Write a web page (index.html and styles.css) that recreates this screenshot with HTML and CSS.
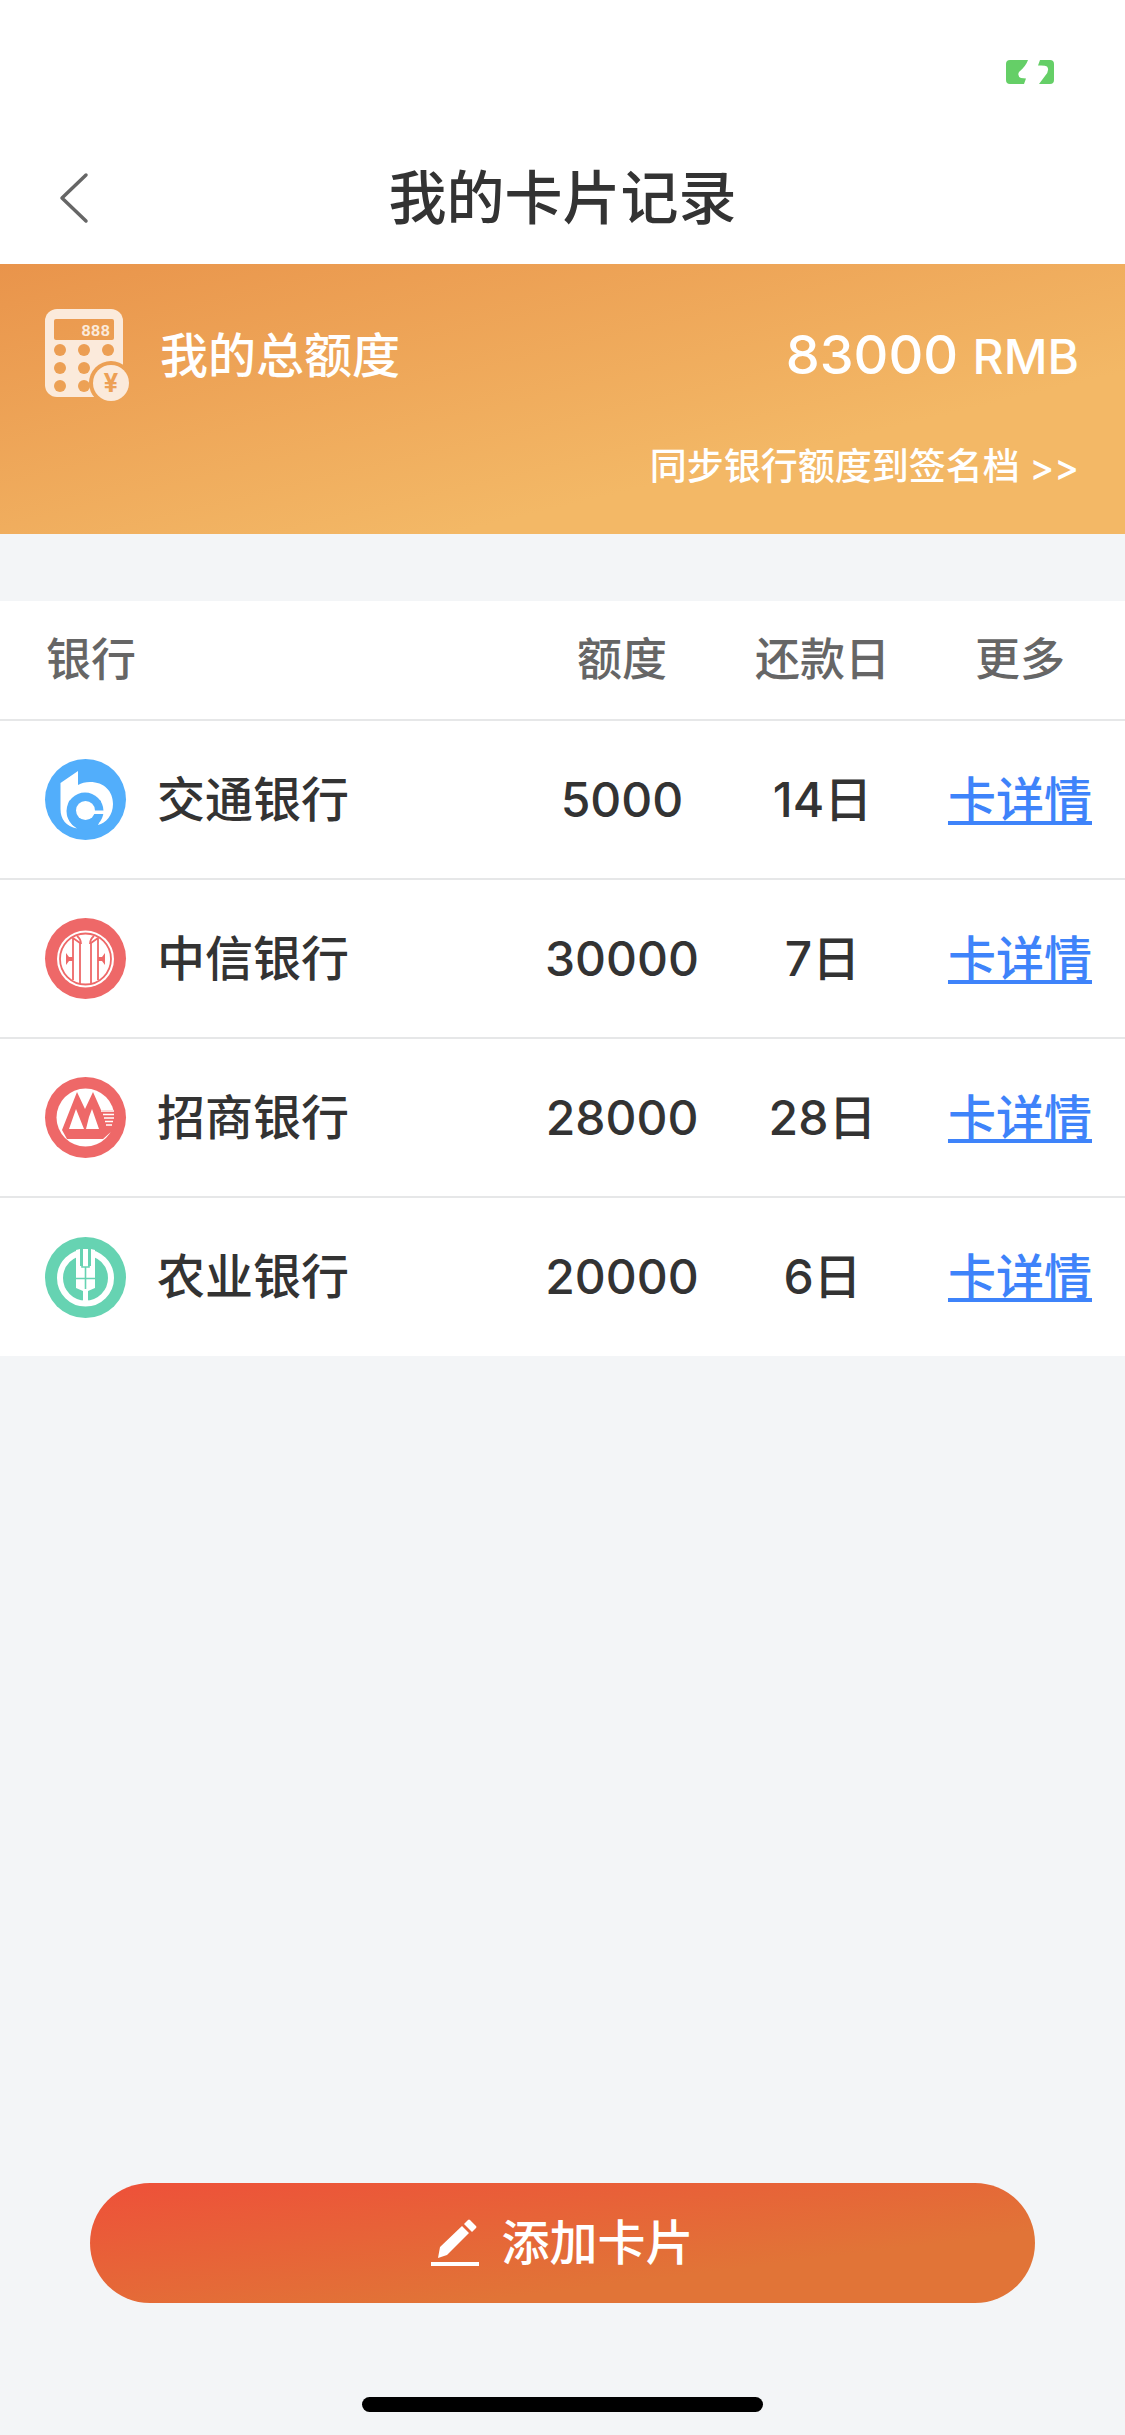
FILE: index.html
```html
<!DOCTYPE html>
<html lang="zh-CN">
<head>
<meta charset="utf-8">
<meta name="viewport" content="width=device-width, initial-scale=1">
<title>我的卡片记录</title>
<link rel="stylesheet" href="styles.css">
</head>
<body>
<div class="page">
  <header class="top">
    <div class="status">
      <svg class="battery" viewBox="0 0 48 24" aria-hidden="true">
        <path fill="#65cf67" d="M4 0H22Q20 6 13 12Q11 16 15 18L20 18.500L18 24H4Q0 24 0 20V4Q0 0 4 0ZM34 0H44Q48 0 48 4V20Q48 24 44 24H33L39 16Q44 10 41 6.500Q39 5 32 5.500Z"/>
      </svg>
    </div>
    <nav class="nav">
      <button class="back" type="button" aria-label="返回">
        <svg viewBox="0 0 30 52" aria-hidden="true"><path d="M27 3L3 26L27 49" fill="none" stroke="#666" stroke-width="3.500" stroke-linecap="round" stroke-linejoin="round"/></svg>
      </button>
      <h1 class="title">我的卡片记录</h1>
    </nav>
  </header>

  <section class="summary">
    <div class="total">
      <svg class="calc" viewBox="0 0 84 94" aria-hidden="true">
        <mask id="cut">
          <rect width="84" height="94" fill="#fff"/>
          <rect x="9" y="10" width="60" height="21" rx="2" fill="#000"/>
          <g fill="#000">
            <circle cx="15" cy="41" r="6"/><circle cx="39" cy="41" r="6"/><circle cx="63" cy="41" r="6"/>
            <circle cx="15" cy="59" r="6"/><circle cx="39" cy="59" r="6"/>
            <circle cx="15" cy="77" r="6"/><circle cx="39" cy="77" r="6"/>
            <circle cx="66" cy="74" r="22"/>
          </g>
        </mask>
        <rect width="78" height="88" rx="12" fill="#fbeadb" mask="url(#cut)"/>
        <circle cx="66" cy="74" r="18" fill="#fbeadb"/>
        <text class="calc-digits" x="65" y="27" text-anchor="end">888</text>
        <text class="calc-yen" x="66" y="83" text-anchor="middle">¥</text>
      </svg>
      <span class="total-label">我的总额度</span>
      <span class="amount">83000 <span class="unit">RMB</span></span>
    </div>
    <a class="sync" href="#sync">同步银行额度到签名档 &gt;&gt;</a>
  </section>

  <main>
    <table class="cards">
      <thead>
        <tr><th class="bank" scope="col">银行</th><th class="limit" scope="col">额度</th><th class="due" scope="col">还款日</th><th class="more" scope="col">更多</th></tr>
      </thead>
      <tbody>
        <tr>
          <td><div class="bank-name">
            <svg class="logo" viewBox="0 0 81 81" aria-hidden="true">
              <circle cx="40.500" cy="40.500" r="40.500" fill="#52aefb"/>
              <path fill="#fff" d="M15.500 24L33 12V26Q38 23 45 23C59 23 68 32 68 45C68 56 61 64 53 66L56 58V42L40 34L24 42L22 52Q22 64 32 69.500Q15.500 66 15.500 50Z"/>
              <circle cx="40" cy="52" r="18.500" fill="#52aefb"/>
              <circle cx="40.500" cy="51.500" r="9.500" fill="#fff"/>
              <path fill="#fff" d="M48 51.500H62V55H48Z"/>
            </svg><span>交通银行</span></div></td>
          <td>5000</td><td>14日</td><td><a href="#card-1">卡详情</a></td>
        </tr>
        <tr>
          <td><div class="bank-name">
            <svg class="logo" viewBox="0 0 81 81" aria-hidden="true">
              <circle cx="40.500" cy="40.500" r="40.500" fill="#ee6868"/>
              <circle cx="40.500" cy="41" r="28.500" fill="#fff"/>
              <g fill="none" stroke="#ee6868" stroke-width="1.800">
                <circle cx="40.500" cy="41" r="25.500"/>
                <path d="M28 20L35 25V66M28 20V62M32 18Q36 21 36 26M53 20L46 25V66M53 20V62M49 18Q45 21 45 26"/>
              </g>
              <path fill="#ee6868" d="M21 35L24 39H28V43H24L21 47ZM60 35L57 39H53V43H57L60 47Z"/>
            </svg><span>中信银行</span></div></td>
          <td>30000</td><td>7日</td><td><a href="#card-2">卡详情</a></td>
        </tr>
        <tr>
          <td><div class="bank-name">
            <svg class="logo" viewBox="0 0 81 81" aria-hidden="true">
              <circle cx="40.500" cy="40.500" r="40.500" fill="#ee6868"/>
              <circle cx="40.500" cy="40.500" r="29" fill="#fff"/>
              <path fill="#ee6868" d="M17 53L32 15L40 32L48 15L56 33H72V46L68 53L58 62H22Z"/>
              <path fill="#fff" d="M31 32L39 52H24ZM47 32L54 52H41L44 40Z"/>
              <path stroke="#fff" stroke-width="1.500" d="M56 34H69M58 37.500H69M59 41H69M60 44.500H68M61 48H67"/>
            </svg><span>招商银行</span></div></td>
          <td>28000</td><td>28日</td><td><a href="#card-3">卡详情</a></td>
        </tr>
        <tr>
          <td><div class="bank-name">
            <svg class="logo" viewBox="0 0 81 81" aria-hidden="true">
              <circle cx="40.500" cy="40.500" r="40.500" fill="#66d3b2"/>
              <circle cx="40.500" cy="41" r="25.500" fill="none" stroke="#fff" stroke-width="6"/>
              <path fill="#66d3b2" d="M32 10H49V24H32Z"/>
              <path fill="#fff" d="M31 13L35 12V29H46V12L50 13V51L43 54V69H38V54L31 51Z"/>
              <path fill="#fff" d="M38 12H43V31H38Z"/>
              <path fill="none" stroke="#66d3b2" stroke-width="1.600" d="M37 11V30H44V11M40.500 30V52M31 41.500H50"/>
            </svg><span>农业银行</span></div></td>
          <td>20000</td><td>6日</td><td><a href="#card-4">卡详情</a></td>
        </tr>
      </tbody>
    </table>
  </main>

  <footer class="bottom">
    <button class="add" type="button">
      <svg class="pencil" viewBox="0 0 48 46" aria-hidden="true" fill="#fff">
        <path d="M0 42H48V46H0ZM7 38L9 27L31 6L38 13L16 35ZM33 4L37 0Q38 -1 39 0L45 6Q46 7 45 8L41 12Z"/>
      </svg>
      <span>添加卡片</span>
    </button>
    <div class="home-bar"></div>
  </footer>
</div>
</body>
</html>
```
FILE: styles.css
```css
* { box-sizing: border-box; }

body {
  margin: 0;
  background: #f3f5f7;
  color: #333;
  font-family: Inter, "Noto Sans CJK SC", sans-serif;
  font-size: 48px;
  font-weight: 500;
  line-height: 72px;
}

button {
  border: 0;
  padding: 0;
  background: none;
  color: inherit;
  font: inherit;
}

svg { display: block; flex: none; overflow: visible; }

.page {
  display: flex;
  flex-direction: column;
  min-height: 100vh;
}

.top { background: #fff; }

.status {
  display: flex;
  justify-content: flex-end;
  height: 132px;
  padding: 60px 71px 0;
}

.battery { width: 48px; height: 24px; }

.nav {
  display: grid;
  grid-template-columns: 150px 1fr 150px;
  align-items: center;
  height: 132px;
}

.back {
  display: flex;
  align-items: center;
  height: 100%;
  padding-left: 58px;
}

.back svg { width: 32px; height: 52px; }

.title {
  margin: 0;
  font-size: 58px;
  font-weight: 500;
  text-align: center;
}

.summary {
  display: flex;
  flex-direction: column;
  gap: 37px;
  height: 270px;
  padding: 45px 46px 0 45px;
  background: linear-gradient(to bottom right, #e9944b, #f3b866 70%, #f3b866);
  color: #fff;
}

.total { display: flex; align-items: center; }

.calc { width: 84px; height: 94px; }

.calc-digits {
  fill: #fbeadb;
  font-family: "Liberation Mono", monospace;
  font-size: 16px;
  font-weight: 700;
}

.calc-yen {
  fill: #eda055;
  font-size: 26px;
  font-weight: 700;
}

.total-label { margin-left: 31px; }

.amount { margin-left: auto; font-size: 54px; }

.unit { font-size: 48px; }

.sync {
  align-self: flex-end;
  color: inherit;
  font-size: 37px;
  line-height: 54px;
  text-decoration: none;
}

.cards {
  width: 100%;
  margin-top: 67px;
  border-collapse: collapse;
  table-layout: fixed;
  background: #fff;
  text-align: center;
}

.cards th {
  height: 119px;
  padding: 0;
  color: #666;
  font-size: 45px;
  font-weight: 500;
}

.cards td { height: 159px; padding: 0; }

.cards tbody tr { border-top: 2px solid #e6e7e8; }

.cards .bank { padding-left: 46px; text-align: left; }

.limit { width: 216px; }

.due { width: 185px; }

.more { width: 210px; }

.bank-name {
  display: flex;
  align-items: center;
  gap: 31px;
  padding-left: 45px;
}

.logo { width: 81px; height: 81px; }

.cards a {
  color: #3e83fa;
  text-decoration: underline 4px;
  text-decoration-skip-ink: none;
  text-underline-offset: 4px;
}

.bottom {
  display: flex;
  flex-direction: column;
  gap: 94px;
  margin-top: auto;
  padding: 60px 90px 23px;
}

.add {
  display: flex;
  align-items: center;
  justify-content: center;
  gap: 22px;
  height: 120px;
  border-radius: 60px;
  background: linear-gradient(to bottom right, #ee5039, #e17437 70%, #e17437);
  color: #fff;
}

.pencil { width: 48px; height: 46px; }

.home-bar {
  align-self: center;
  width: 401px;
  height: 15px;
  border-radius: 8px;
  background: #000;
}
```
